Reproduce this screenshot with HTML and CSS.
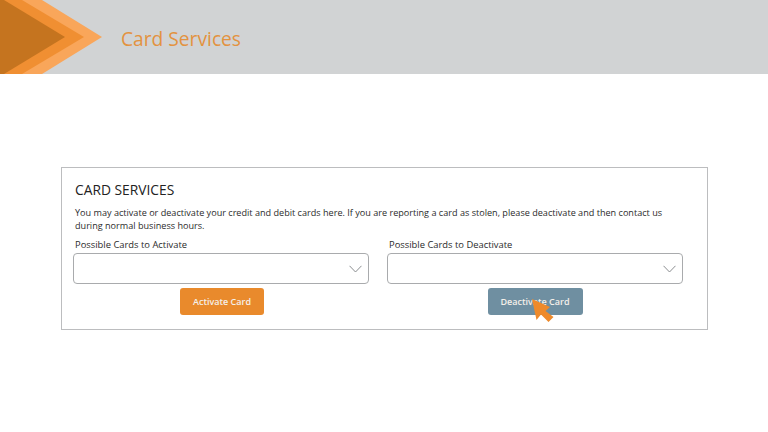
FILE: index.html
```html
<!DOCTYPE html>
<html lang="en">
<head>
    <meta charset="UTF-8">
    <meta name="viewport" content="width=device-width, initial-scale=1.0">
    <title>Card Services</title>
    <link rel="stylesheet" href="styles.css">
</head>
<body>

    <header class="banner">
        <svg class="banner-logo" width="102" height="74" viewBox="0 0 102 74">
            <polygon points="42,0 102,37 42,74 0,74 0,0" fill="#f9a65a"/>
            <polygon points="22,0 84,37 22,74 0,74 0,0" fill="#f08f32"/>
            <polygon points="4,0 65,37 4,74 0,74 0,0" fill="#c5741f"/>
        </svg>
        <h1>Card Services</h1>
    </header>

    <main class="card">
        <h2>CARD SERVICES</h2>
        <p>You may activate or deactivate your credit and debit cards here. If you are reporting a card as stolen, please deactivate and then contact us during normal business hours.</p>

        <div class="columns">
            <div class="column">
                <label>Possible Cards to Activate</label>
                <div class="select">
                    <svg width="13" height="8" viewBox="0 0 13 8"><path d="M0.5 0.8 L6.5 7 L12.5 0.8" fill="none" stroke="#8a8d90" stroke-width="1"/></svg>
                </div>
                <button class="btn btn-activate">Activate Card</button>
            </div>
            <div class="column">
                <label>Possible Cards to Deactivate</label>
                <div class="select">
                    <svg width="13" height="8" viewBox="0 0 13 8"><path d="M0.5 0.8 L6.5 7 L12.5 0.8" fill="none" stroke="#8a8d90" stroke-width="1"/></svg>
                </div>
                <button class="btn btn-deactivate">Deactivate Card</button>
            </div>
        </div>

        <!-- mouse pointer on top of the button -->
        <svg class="pointer" width="24" height="25" viewBox="0 0 24 25">
            <polygon points="2,1 20,9 15.5,13 23.5,19 18.5,24 11,16.5 6.5,22" fill="#ee8a2b"/>
        </svg>
    </main>

</body>
</html>
```

FILE: styles.css
```css
body {
    font-family: 'Open Sans', sans-serif;
    background: white;
    color: #2b2b2b;
    margin: 0;
    padding: 0;
}
.banner {
    display: flex;
    align-items: center;
    gap: 19px;
    height: 74px;
    background: #d1d3d4;
}
.banner-logo {
    display: block;
    flex-shrink: 0;
}
.banner h1 {
    margin: 2px 0 0 0;
    font-size: 19.2px;
    font-weight: 400;
    color: #e39240;
}
.card {
    position: relative;
    box-sizing: border-box;
    width: 647px;
    height: 163px;
    margin: 93px 0 0 61px;
    padding: 12px 24px 0 13px;
    border: 1px solid #bcbdbf;
}
h2 {
    margin: 0 0 6px 0;
    font-size: 13.8px;
    line-height: 20px;
    font-weight: 400;
    color: #222;
}
p {
    margin: 0;
    font-size: 9.1px;
    line-height: 13px;
}
.columns {
    display: flex;
    gap: 18px;
    margin-top: 6px;
    margin-left: -2px;
}
.column {
    flex: 1;
    display: flex;
    flex-direction: column;
    align-items: center;
}
label {
    align-self: flex-start;
    margin-left: 2px;
    font-size: 9.4px;
    line-height: 14px;
}
.select {
    box-sizing: border-box;
    display: flex;
    align-items: center;
    justify-content: flex-end;
    width: 100%;
    height: 31px;
    margin-top: 1px;
    padding-right: 6px;
    border: 1px solid #a9abad;
    border-radius: 4px;
}
.btn {
    height: 27px;
    margin-top: 4px;
    border: none;
    border-radius: 3px;
    font-family: inherit;
    font-size: 9px;
    font-weight: 600;
    color: #f4f0ea;
    cursor: pointer;
}
.btn-activate {
    width: 84px;
    margin-left: 2px;
    background: #e98a2c;
}
.btn-deactivate {
    width: 95px;
    background: #6f8fa1;
}
.pointer {
    position: absolute;
    left: 468px;
    top: 130px;
}
```
